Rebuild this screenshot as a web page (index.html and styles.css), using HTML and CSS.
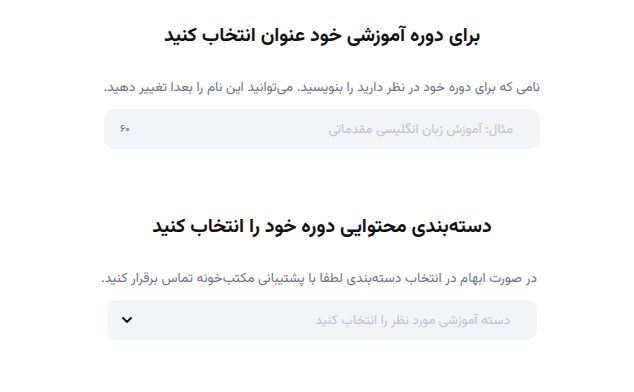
FILE: index.html
```html
<!DOCTYPE html>
<html lang="fa" dir="rtl">
    <head>
        <meta charset="utf-8">
        <title>اطلاعات دوره</title>
        <link rel="stylesheet" href="styles.css">
    </head>
    <body>
        <div class="page">

            <!-- عنوان دوره -->
            <div class="section sectionTitle">
                <h2 class="heading">برای دوره آموزشی خود عنوان انتخاب کنید</h2>
                <p class="hint">نامی که برای دوره خود در نظر دارید را بنویسید. می‌توانید این نام را بعدا تغییر دهید.</p>
                <div class="field">
                    <input class="fieldInput" type="text" placeholder="مثال: آموزش زبان انگلیسی مقدماتی">
                    <span class="counter">۶۰</span>
                </div>
            </div>

            <!-- دسته‌بندی -->
            <div class="section sectionCategory">
                <h2 class="heading">دسته‌بندی محتوایی دوره خود را انتخاب کنید</h2>
                <p class="hint">در صورت ابهام در انتخاب دسته‌بندی لطفا با پشتیبانی مکتب‌خونه تماس برقرار کنید.</p>
                <div class="field">
                    <div class="fieldSelect">دسته آموزشی مورد نظر را انتخاب کنید</div>
                    <svg class="chevron" width="12" height="8" viewBox="0 0 12 8">
                        <path d="M2 2 L6 6 L10 2" fill="none" stroke="#111" stroke-width="2" stroke-linecap="round" stroke-linejoin="round"/>
                    </svg>
                </div>
            </div>

        </div>
    </body>
</html>
```

FILE: styles.css
```css
body
    {
        margin:           0;
        background-color: #fff;
        font-family:      Vazirmatn, "Noto Sans Arabic", sans-serif;
    }

.page
    {
        display:          flex;
        flex-direction:   column;
        align-items:      center;
        padding-top:      22px;
        padding-left:     10px;
    }

.section
    {
        display:          flex;
        flex-direction:   column;
        align-items:      stretch;
    }

.sectionTitle
    {
        width:            436px;
    }

.sectionCategory
    {
        width:            430px;
        margin-top:       64px;
    }

.heading
    {
        margin:           0;
        text-align:       center;
        font-size:        19.5px;
        font-weight:      bold;
        color:            #111;
        line-height:      28px;
    }

.hint
    {
        margin:           28px 0 0 0;
        font-size:        13.6px;
        color:            #6b7280;
        line-height:      20px;
        white-space:      nowrap;
    }

.field
    {
        position:         relative;
        margin-top:       11px;
    }

.fieldInput,
.fieldSelect
    {
        box-sizing:       border-box;
        width:            100%;
        height:           40px;
        border:           none;
        border-radius:    10px;
        background-color: #f2f4f7;
        padding:          0 27px;
        font-family:      inherit;
        font-size:        13.3px;
        color:            #111;
        outline:          none;
    }

.fieldInput::placeholder
    {
        color:            #bfc3c9;
    }

.fieldSelect
    {
        display:          flex;
        align-items:      center;
        color:            #bfc3c9;
    }

.counter
    {
        position:         absolute;
        left:             16px;
        top:              12px;
        font-size:        11px;
        color:            #6b7280;
    }

.chevron
    {
        position:         absolute;
        left:             14px;
        top:              16px;
    }
```
